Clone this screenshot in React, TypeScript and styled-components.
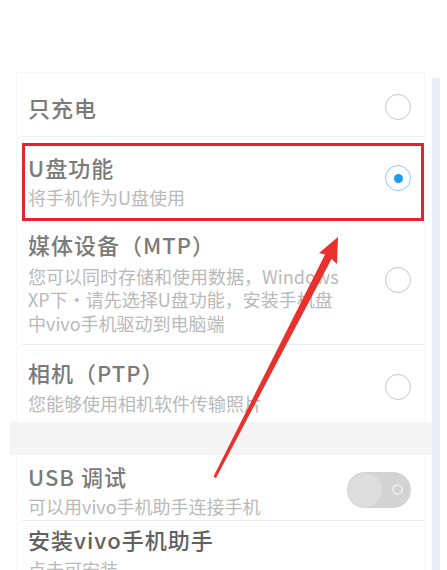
import React from "react";
import styled, { createGlobalStyle } from "styled-components";

const Global = createGlobalStyle`
  html, body { margin: 0; padding: 0; background: #ffffff; }
  body { font-family: "Noto Sans CJK SC", "Noto Sans", sans-serif; }
  * { box-sizing: border-box; }
`;

const Page = styled.div`
  position: relative;
  display: flex;
  align-items: flex-start;
  width: 447px;
  height: 570px;
  overflow: hidden;
  background: #ffffff;
`;

const Main = styled.div`
  flex: none;
  width: 432px;
  padding-top: 72px;
  display: flex;
  flex-direction: column;
  & > * { flex-shrink: 0; }
`;

const Strip = styled.div`
  flex: none;
  width: 8px;
  height: 492px;
  margin-top: 78px;
  background: #eaedf8;
`;

const Card = styled.div<{ $top?: boolean }>`
  margin-left: 16px;
  width: 409px;
  border: 1px solid #f7f7f7;
  border-bottom: none;
  ${(p) => (p.$top ? "" : "border-top: none;")}
  padding-top: ${(p) => (p.$top ? "5px" : "0")};
  display: flex;
  flex-direction: column;
  & > * { flex-shrink: 0; }
`;

const Row = styled.div<{
  $pt: number;
  $pb: number;
  $line?: boolean;
  $marked?: boolean;
  $mt?: number;
  $h?: number;
}>`
  margin-left: 5px;
  width: 402px;
  margin-top: ${(p) => p.$mt ?? 0}px;
  ${(p) => (p.$h ? `height: ${p.$h}px;` : "")}
  padding: ${(p) => p.$pt}px 13px ${(p) => p.$pb}px 6px;
  display: flex;
  align-items: center;
  justify-content: space-between;
  border-bottom: ${(p) => (p.$line ? "1px solid #ececec" : "none")};
  box-shadow: ${(p) => (p.$marked ? "inset 0 0 0 3px #e3262b" : "none")};
`;

const Texts = styled.div`
  display: flex;
  flex-direction: column;
`;

const Title = styled.div<{ $dark?: boolean }>`
  font-size: 22px;
  line-height: 28px;
  letter-spacing: 1px;
  font-weight: 500;
  color: ${(p) => (p.$dark ? "#616161" : "#7b7b7b")};
  white-space: nowrap;
`;

const Sub = styled.div<{ $gap: number }>`
  margin-top: ${(p) => p.$gap}px;
  font-size: 18px;
  line-height: 23.5px;
  color: #b9b9b9;
  white-space: nowrap;
`;

const Radio = styled.div<{ $on?: boolean; $lift?: number }>`
  flex: none;
  width: 26px;
  height: 26px;
  border-radius: 50%;
  border: 1.6px solid ${(p) => (p.$on ? "#86cdf3" : "#c6c6c6")};
  display: flex;
  align-items: center;
  justify-content: center;
  margin-bottom: ${(p) => p.$lift ?? 0}px;
  &::after {
    content: "";
    display: ${(p) => (p.$on ? "block" : "none")};
    width: 9px;
    height: 9px;
    border-radius: 50%;
    background: #1d9cf0;
  }
`;

const Band = styled.div`
  margin-left: 10px;
  width: 422px;
  height: 33px;
  background: #f4f4f4;
`;

const Toggle = styled.div`
  flex: none;
  width: 64px;
  height: 36px;
  border-radius: 18px;
  background: #d3d3d3;
  display: flex;
  align-items: center;
  justify-content: space-between;
  padding: 0 8px 0 1px;
`;

const Knob = styled.div`
  width: 34px;
  height: 34px;
  border-radius: 50%;
  background: #dddddd;
`;

const OffMark = styled.div`
  width: 11px;
  height: 11px;
  border-radius: 50%;
  border: 2.5px solid #e9e9e9;
`;

const ArrowLayer = styled.svg`
  position: absolute;
  left: 0;
  top: 0;
  pointer-events: none;
`;

export default function App() {
  return (
    <>
      <Global />
      <Page>
        <Main>
          <Card $top>
            <Row $pt={0} $pb={0} $h={59} $line>
              <Title>只充电</Title>
              <Radio />
            </Row>
            <Row $pt={10} $pb={11} $mt={6} $marked>
              <Texts>
                <Title>U盘功能</Title>
                <Sub $gap={5}>将手机作为U盘使用</Sub>
              </Texts>
              <Radio $on $lift={6} />
            </Row>
            <Row $pt={9} $pb={9} $line>
              <Texts>
                <Title>媒体设备（MTP）</Title>
                <Sub $gap={7}>
                  您可以同时存储和使用数据，Windows
                  <br />
                  XP下·请先选择U盘功能，安装手机盘
                  <br />
                  中vivo手机驱动到电脑端
                </Sub>
              </Texts>
              <Radio $lift={4} />
            </Row>
            <Row $pt={13} $pb={6}>
              <Texts>
                <Title>相机（PTP）</Title>
                <Sub $gap={6}>您能够使用相机软件传输照片</Sub>
              </Texts>
              <Radio />
            </Row>
          </Card>
          <Band />
          <Card>
            <Row $pt={7} $pb={2} $line>
              <Texts>
                <Title>USB 调试</Title>
                <Sub $gap={5}>可以用vivo手机助手连接手机</Sub>
              </Texts>
              <Toggle>
                <Knob />
                <OffMark />
              </Toggle>
            </Row>
            <Row $pt={4} $pb={0}>
              <Texts>
                <Title $dark>安装vivo手机助手</Title>
                <Sub $gap={5}>点击可安装</Sub>
              </Texts>
            </Row>
          </Card>
        </Main>
        <Strip />
        <ArrowLayer width="447" height="570" viewBox="0 0 447 570">
          <polygon
            points="338,237 337,264 331.5,259 216,478 213.5,476.5 325,254.5 319,253"
            fill="#e8302c"
          />
        </ArrowLayer>
      </Page>
    </>
  );
}
